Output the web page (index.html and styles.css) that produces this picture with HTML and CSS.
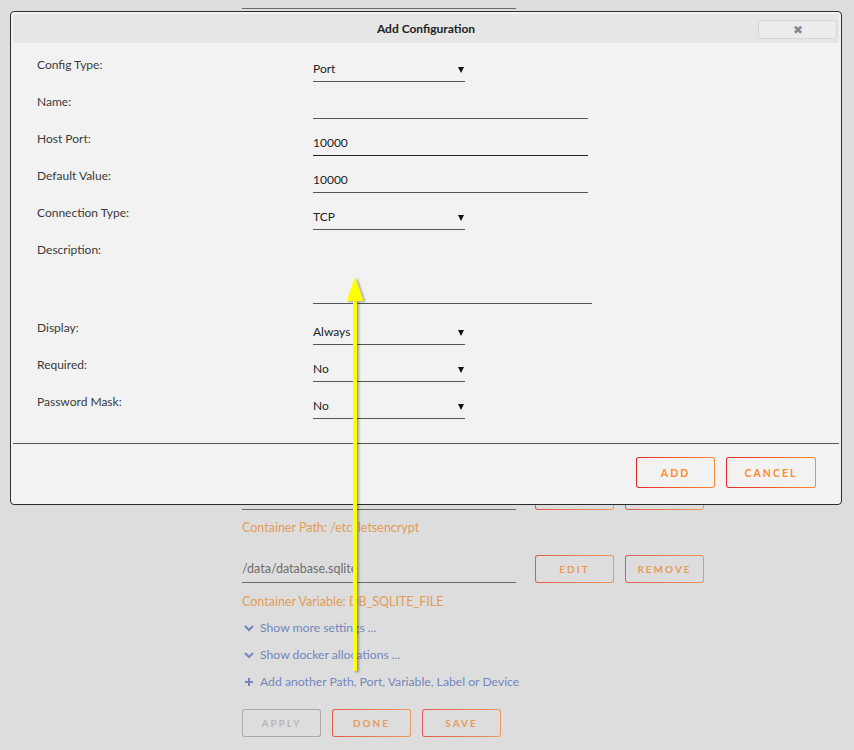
FILE: index.html
```html
<!DOCTYPE html>
<html lang="en">
<head>
    <meta charset="UTF-8">
    <meta name="viewport" content="width=device-width, initial-scale=1.0">
    <title>Add Configuration</title>
    <link rel="stylesheet" href="styles.css">
</head>
<body>
    <div class="page">
        <div class="entry entry-top">
            <div class="field"></div>
        </div>

        <div class="entry entry-hidden">
            <div class="field">/data/letsencrypt</div>
            <button class="btn">EDIT</button>
            <button class="btn">REMOVE</button>
        </div>
        <p class="caption">Container Path: /etc/letsencrypt</p>

        <div class="entry">
            <div class="field">/data/database.sqlite</div>
            <button class="btn">EDIT</button>
            <button class="btn">REMOVE</button>
        </div>
        <p class="caption caption-var">Container Variable: DB_SQLITE_FILE</p>

        <a class="more-link" href="#">
            <svg class="icon" viewBox="0 0 10 10"><path d="M1 3 L5 7 L9 3" fill="none" stroke="currentColor" stroke-width="2"/></svg>
            Show more settings ...
        </a>
        <a class="more-link" href="#">
            <svg class="icon" viewBox="0 0 10 10"><path d="M1 3 L5 7 L9 3" fill="none" stroke="currentColor" stroke-width="2"/></svg>
            Show docker allocations ...
        </a>
        <a class="more-link" href="#">
            <svg class="icon" viewBox="0 0 10 10"><path d="M5 1 V9 M1 5 H9" fill="none" stroke="currentColor" stroke-width="2"/></svg>
            Add another Path, Port, Variable, Label or Device
        </a>

        <div class="actions">
            <button class="btn btn-disabled">APPLY</button>
            <button class="btn">DONE</button>
            <button class="btn">SAVE</button>
        </div>
    </div>

    <div class="dialog">
        <div class="dialog-title">
            <span>Add Configuration</span>
            <button class="close">&#x2716;</button>
        </div>

        <div class="dialog-body">
            <div class="row">
                <label>Config Type:</label>
                <div class="control select">Port</div>
            </div>
            <div class="row">
                <label>Name:</label>
                <div class="control text"></div>
            </div>
            <div class="row">
                <label>Host Port:</label>
                <div class="control text focused">10000</div>
            </div>
            <div class="row">
                <label>Default Value:</label>
                <div class="control text">10000</div>
            </div>
            <div class="row">
                <label>Connection Type:</label>
                <div class="control select">TCP</div>
            </div>
            <div class="row row-desc">
                <label>Description:</label>
                <div class="control textarea"></div>
            </div>
            <div class="row">
                <label>Display:</label>
                <div class="control select">Always</div>
            </div>
            <div class="row">
                <label>Required:</label>
                <div class="control select">No</div>
            </div>
            <div class="row">
                <label>Password Mask:</label>
                <div class="control select">No</div>
            </div>
        </div>

        <div class="dialog-footer">
            <button class="btn btn-strong btn-add">ADD</button>
            <button class="btn btn-strong btn-cancel">CANCEL</button>
        </div>
    </div>

    <svg class="arrow" width="30" height="410" viewBox="0 0 30 410">
        <defs>
            <filter id="shadow" x="-50%" y="-10%" width="200%" height="120%">
                <feDropShadow dx="2" dy="1" stdDeviation="1.2" flood-color="#000" flood-opacity="0.35"/>
            </filter>
        </defs>
        <g filter="url(#shadow)" fill="#ffff00">
            <polygon points="13,2 4.5,26 21.5,26"/>
            <rect x="11" y="25" width="4" height="371"/>
        </g>
    </svg>
</body>
</html>
```

FILE: styles.css
```css
* {
    margin: 0;
    padding: 0;
    box-sizing: border-box;
}

body {
    background: #dddddd;
    font-family: Lato, "Open Sans", sans-serif;
    font-size: 12px;
    color: #333;
    overflow: hidden;
    height: 750px;
}

button {
    font-family: inherit;
    cursor: pointer;
}

/* page behind the dialog */
.page {
    padding-left: 242px;
}

.entry {
    display: flex;
    align-items: flex-end;
    height: 28px;
}

.entry-top {
    margin-top: -19px;
}

.entry-hidden {
    margin-top: 473px;
}

.field {
    width: 274px;
    height: 27px;
    margin-right: 19px;
    border-bottom: 1px solid #6a6a6a;
    color: #6e6e6e;
    font-size: 12.5px;
    line-height: 26px;
}

.btn {
    width: 79px;
    height: 28px;
    margin-right: 11px;
    border: 1px solid transparent;
    border-radius: 3px;
    background: linear-gradient(#dddddd, #dddddd) padding-box,
                linear-gradient(90deg, #e05a55, #eb9a58) border-box;
    color: #e89a5a;
    font-size: 10px;
    font-weight: 700;
    letter-spacing: 2px;
}

.btn-disabled {
    background: linear-gradient(#dddddd, #dddddd) padding-box,
                linear-gradient(90deg, #a9a9a9, #a9a9a9) border-box;
    color: #b6b6b6;
}

.caption {
    margin-top: 9px;
    line-height: 18px;
    margin-bottom: 18px;
    color: #e39c55;
    font-size: 12.5px;
}

.caption-var {
    margin-top: 10px;
    margin-bottom: 8px;
}

.more-link {
    display: flex;
    align-items: center;
    line-height: 18px;
    margin-bottom: 9px;
    color: #7387bd;
    font-size: 12.2px;
    text-decoration: none;
}

.more-link .icon {
    width: 10px;
    height: 10px;
    margin: 0 6px 0 2px;
}

.actions {
    display: flex;
    margin-top: 18px;
}

/* dialog */
.dialog {
    position: absolute;
    left: 10px;
    top: 11px;
    width: 832px;
    height: 494px;
    padding: 2px 2px 0;
    background: #f2f2f2;
    border: 1px solid #2c2c2c;
    border-radius: 4px;
}

.dialog-title {
    position: relative;
    height: 29px;
    background: #e6e6e6;
    display: flex;
    align-items: center;
    justify-content: center;
    font-weight: 700;
    color: #222;
}

.close {
    position: absolute;
    right: 2px;
    top: 6px;
    width: 79px;
    height: 19px;
    border: 1px solid #d6d6d6;
    border-radius: 3px;
    background: #ececec;
    color: #8a8a8a;
    font-size: 12px;
    line-height: 16px;
}

.dialog-body {
    padding: 14px 0 0 24px;
    height: 400px;
}

.row {
    display: flex;
    align-items: flex-start;
    height: 37px;
}

.row label {
    width: 276px;
    line-height: 16px;
    color: #3a3a3a;
}

.row-desc {
    height: 78px;
}

.control {
    height: 25px;
    padding-top: 4px;
    border-bottom: 1px solid #555;
    line-height: 16px;
    color: #222;
}

.select {
    position: relative;
    width: 152px;
}

.select::after {
    content: "";
    position: absolute;
    right: 1px;
    top: 10px;
    border-left: 3px solid transparent;
    border-right: 3px solid transparent;
    border-top: 6px solid #111;
}

.text {
    width: 275px;
}

.focused {
    border-bottom-color: #222;
}

.textarea {
    width: 279px;
    height: 62px;
}

.dialog-footer {
    border-top: 1px solid #555;
    display: flex;
    justify-content: flex-end;
    padding: 13px 23px 0 0;
}

.btn-strong {
    height: 31px;
    background: linear-gradient(#f2f2f2, #f2f2f2) padding-box,
                linear-gradient(90deg, #e22828, #ff8c2f) border-box;
    color: #ff8c2f;
    font-size: 10.5px;
}

.btn-cancel {
    width: 90px;
    margin-right: 0;
}

.arrow {
    position: absolute;
    left: 342px;
    top: 275px;
}
```
